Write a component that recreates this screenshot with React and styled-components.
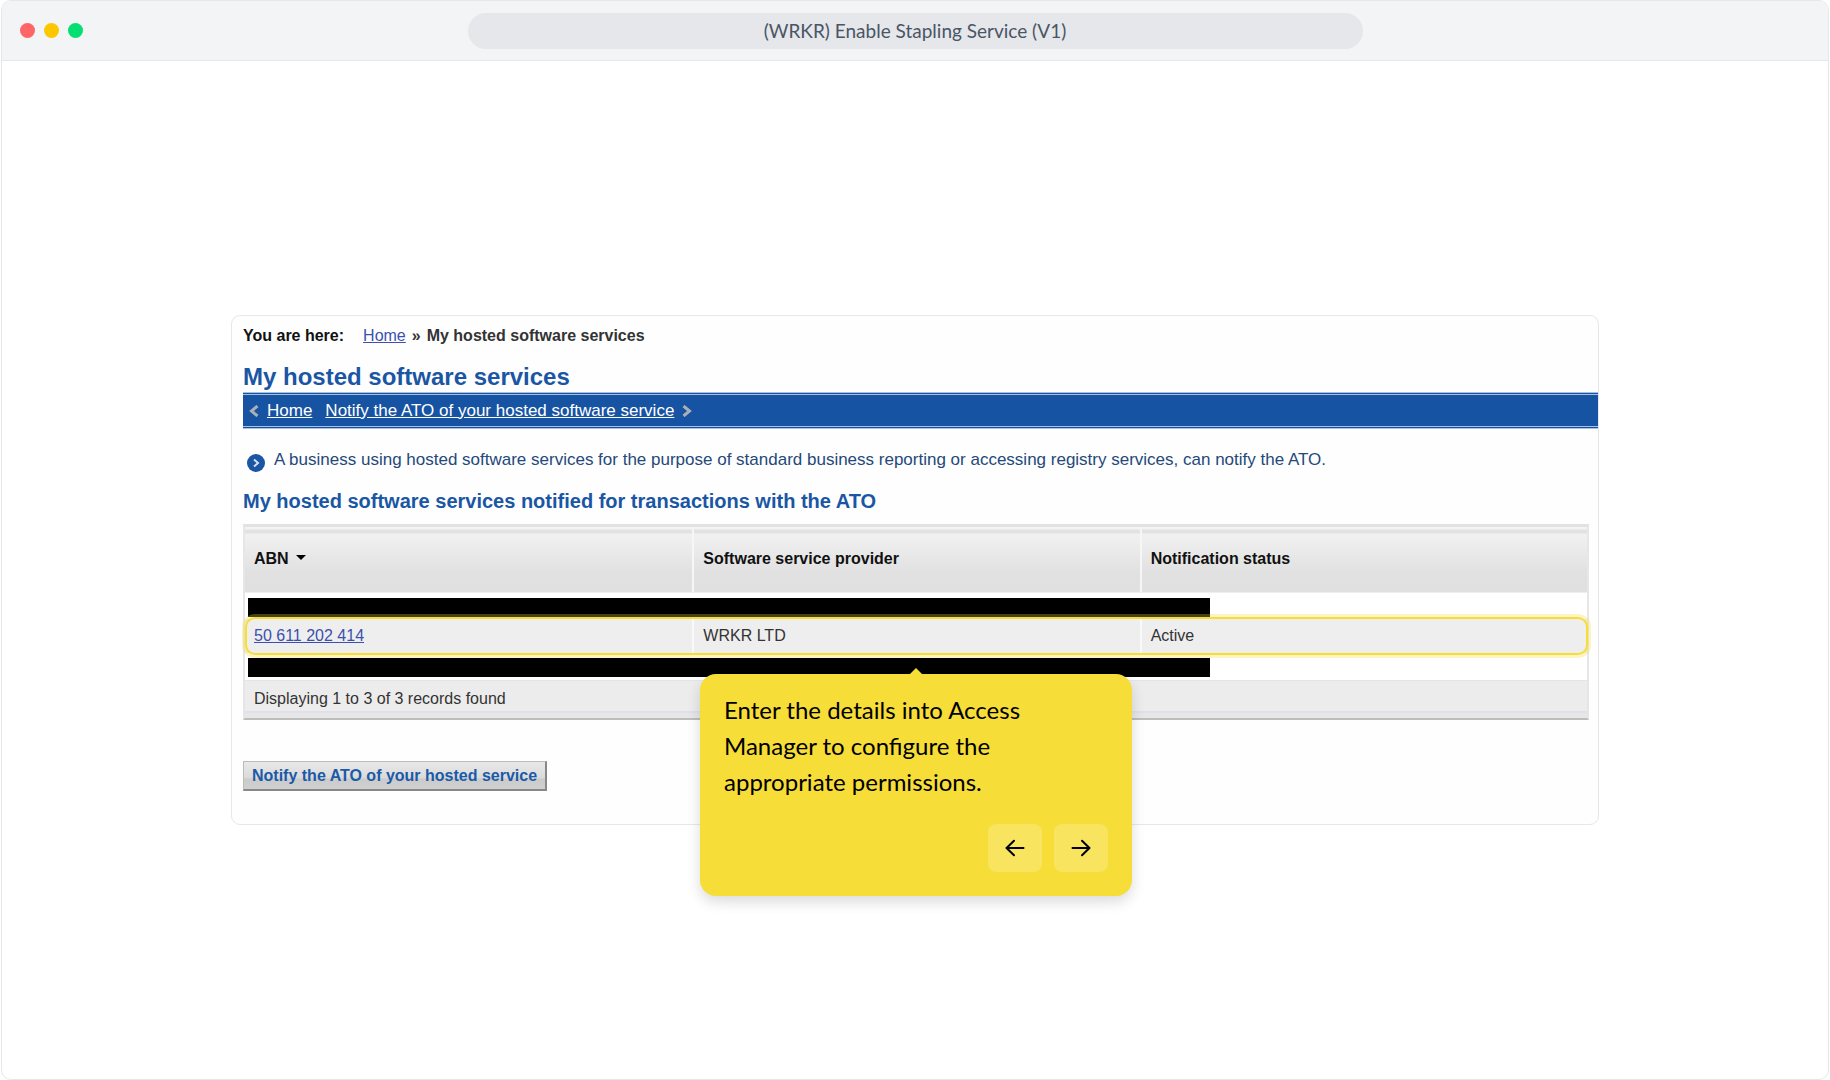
import React from "react";
import styled, { createGlobalStyle } from "styled-components";

const GlobalStyle = createGlobalStyle`
  * {
    box-sizing: border-box;
  }

  body {
    margin: 0;
    background: #fff;
    font-family: "Liberation Sans", Arial, sans-serif;
  }

  h1, h2, p {
    margin: 0;
  }
`;

const Window = styled.div`
  display: flex;
  flex-direction: column;
  min-height: 100vh;
  margin: 0 1px;
  border: 1px solid #e5e7eb;
  border-radius: 10px;
  background: #fff;
  overflow: hidden;
`;

const TitleBar = styled.header`
  display: grid;
  grid-template-columns: 1fr 50% 1fr;
  align-items: center;
  height: 60px;
  padding: 0 18px;
  border-bottom: 1px solid #e5e7eb;
  background: #f3f4f6;
`;

const Dots = styled.div`
  display: flex;
  gap: 9px;
`;

const Dot = styled.span`
  width: 15px;
  height: 15px;
  border-radius: 50%;
  background: ${(props) => props.$color};
`;

const Title = styled.div`
  grid-column: 2;
  border-radius: 18px;
  background: #e5e7eb;
  color: #4a5565;
  font-family: Lato, sans-serif;
  font-size: 19px;
  line-height: 36px;
  text-align: center;
`;

const Stage = styled.main`
  flex: 1;
  display: flex;
  flex-direction: column;
  justify-content: center;
  padding: 24px 229px;
`;

const Card = styled.section`
  padding: 9px 0 33px 11px;
  border: 1px solid #e5e7eb;
  border-radius: 9px;
  background: #fefefe;
`;

const Breadcrumb = styled.nav`
  display: flex;
  gap: 6px;
  color: #333;
  font-size: 16px;
  font-weight: bold;
  line-height: 22px;
`;

const Lead = styled.span`
  margin-right: 13px;
  color: #111;
`;

const TextLink = styled.a`
  color: #3c50b0;
  font-weight: normal;
  text-decoration: underline;
`;

const PageTitle = styled.h1`
  margin-top: 16px;
  color: #1a56a4;
  font-size: 24px;
  line-height: 28px;
`;

const LinkBar = styled.nav`
  display: flex;
  align-items: center;
  height: 37px;
  margin-top: 1px;
  padding: 0 6px;
  border-top: 3px double #a9c1e0;
  border-bottom: 3px double #a9c1e0;
  background: #1653a2;
  font-size: 17px;
`;

const BarLink = styled.a`
  margin-left: ${(props) => props.$gap}px;
  color: #fff;
  text-decoration: underline;
`;

const Chevron = styled.svg`
  width: 10px;
  height: 12px;
  margin-left: ${(props) => props.$gap || 0}px;
  fill: none;
  stroke: #a9b0b8;
  stroke-width: 3;
`;

const Note = styled.p`
  display: flex;
  gap: 9px;
  margin-top: 19px;
  padding-left: 4px;
  color: #24497a;
  font-size: 17px;
  line-height: 24px;

  svg {
    flex: none;
    margin-top: 6px;
  }
`;

const SectionTitle = styled.h2`
  margin-top: 17px;
  color: #1a56a4;
  font-size: 20px;
  line-height: 24px;
`;

const TableFrame = styled.div`
  margin: 11px 9px 0 0;
  border: 2px solid #e6e6e6;
  border-top: 3px solid #e2e2e2;
  border-bottom-color: #bdbdbd;
`;

const Table = styled.table`
  width: 100%;
  table-layout: fixed;
  border-spacing: 0;
  color: #333;
  font-size: 16px;
  text-align: left;
`;

const HeadCell = styled.th`
  height: 66px;
  padding: 0 9px 2px;
  border-bottom: 1px solid #efefef;
  background: linear-gradient(
    #f3f3f3 2px,
    #e2e2e2 3px,
    #e2e2e2 6px,
    #f1f1f1 7px,
    #e1e1e1 45px,
    #e0e0e0
  );
  color: #111;

  & + & {
    border-left: 2px solid #f6f6f6;
  }

  svg {
    margin-left: 7px;
    vertical-align: 4px;
  }
`;

const HiddenCell = styled.td`
  padding: 5px 3px ${(props) => props.$below}px;
  background: #fff;
`;

const Redaction = styled.div`
  width: 72%;
  height: 19px;
  background: #000;
`;

const ActiveRow = styled.tr`
  position: relative;
`;

const Highlight = styled.div`
  position: absolute;
  inset: -2px -1px -2px 0;
  border: 2px solid #f6dd38;
  border-radius: 10px;
  box-shadow: 0 0 0 3px rgba(246, 221, 56, 0.3);
  pointer-events: none;
`;

const Cell = styled.td`
  height: 34px;
  padding: 0 9px;
  background: #eee;

  & + & {
    border-left: 2px solid #f9f9f9;
  }
`;

const FootCell = styled.td`
  height: 38px;
  padding: 0 9px 2px;
  border-top: 1px solid #e4e4e4;
  background: linear-gradient(
    #ececec 30px,
    #e0e0ec 30px,
    #e0e0ec 32px,
    #e7e7e7 32px
  );
`;

const NotifyButton = styled.button`
  display: block;
  height: 30px;
  margin-top: 41px;
  padding: 0 8px;
  border: 1px solid #bbb;
  border-right: 2px solid #888;
  border-bottom: 2px solid #888;
  background: linear-gradient(#e8e8e8, #dadada 60%, #cbcbcb 62%, #d0d0d0);
  color: #1a5aa8;
  font-family: inherit;
  font-size: 16px;
  font-weight: bold;
`;

const Popover = styled.div`
  position: absolute;
  top: calc(100% + 21px);
  left: 50%;
  z-index: 1;
  width: 432px;
  padding: 18px 24px 24px;
  border-radius: 16px;
  background: #f6dd38;
  box-shadow: 0 6px 14px rgba(0, 0, 0, 0.14);
  color: #000;
  font-family: Lato, sans-serif;
  font-size: 24px;
  line-height: 36px;
  transform: translateX(-50%);

  &::before {
    content: "";
    position: absolute;
    top: -6px;
    left: 50%;
    margin-left: -6px;
    border: 6px solid transparent;
    border-top: 0;
    border-bottom-color: #f6dd38;
  }
`;

const PopoverText = styled.p`
  padding-right: 60px;
`;

const PopoverActions = styled.div`
  display: flex;
  justify-content: flex-end;
  gap: 12px;
  margin-top: 24px;
`;

const ArrowButton = styled.button`
  display: grid;
  place-items: center;
  width: 54px;
  height: 48px;
  padding: 0;
  border: 0;
  border-radius: 8px;
  background: #f8e45f;
  cursor: pointer;

  svg {
    fill: none;
    stroke: #000;
    stroke-width: 2;
    stroke-linecap: round;
    stroke-linejoin: round;
  }
`;

const StepPopover = () => {
  return (
    <Popover role="dialog" aria-label="Step">
      <PopoverText>
        Enter the details into Access Manager to configure the appropriate
        permissions.
      </PopoverText>
      <PopoverActions>
        <ArrowButton aria-label="Previous step">
          <svg width="20" height="18" viewBox="0 0 20 18">
            <path d="M18.5 9H1.5M9 1.8L1.5 9L9 16.2" />
          </svg>
        </ArrowButton>
        <ArrowButton aria-label="Next step">
          <svg width="20" height="18" viewBox="0 0 20 18">
            <path d="M1.5 9H18.5M11 1.8L18.5 9L11 16.2" />
          </svg>
        </ArrowButton>
      </PopoverActions>
    </Popover>
  );
};

const ServicesTable = () => {
  return (
    <TableFrame>
      <Table>
        <thead>
          <tr>
            <HeadCell>
              ABN
              <svg width="10" height="5" viewBox="0 0 10 5">
                <path d="M0 0H10L5 5Z" />
              </svg>
            </HeadCell>
            <HeadCell>Software service provider</HeadCell>
            <HeadCell>Notification status</HeadCell>
          </tr>
        </thead>
        <tbody>
          <tr>
            <HiddenCell colSpan={3} $below={2}>
              <Redaction />
            </HiddenCell>
          </tr>
          <ActiveRow>
            <Cell>
              <TextLink href="#abn">50 611 202 414</TextLink>
              <Highlight />
              <StepPopover />
            </Cell>
            <Cell>WRKR LTD</Cell>
            <Cell>Active</Cell>
          </ActiveRow>
          <tr>
            <HiddenCell colSpan={3} $below={3}>
              <Redaction />
            </HiddenCell>
          </tr>
        </tbody>
        <tfoot>
          <tr>
            <FootCell colSpan={3}>Displaying 1 to 3 of 3 records found</FootCell>
          </tr>
        </tfoot>
      </Table>
    </TableFrame>
  );
};

const App = () => {
  return (
    <>
      <GlobalStyle />
      <Window>
        <TitleBar>
          <Dots>
            <Dot $color="#ff6467" />
            <Dot $color="#fdc700" />
            <Dot $color="#05df72" />
          </Dots>
          <Title>(WRKR) Enable Stapling Service (V1)</Title>
        </TitleBar>
        <Stage>
          <Card>
            <Breadcrumb>
              <Lead>You are here:</Lead>
              <TextLink href="#home">Home</TextLink>
              <span>»</span>
              <span>My hosted software services</span>
            </Breadcrumb>
            <PageTitle>My hosted software services</PageTitle>
            <LinkBar>
              <Chevron viewBox="0 0 10 12">
                <path d="M8.5 1L2.5 6L8.5 11" />
              </Chevron>
              <BarLink href="#home" $gap={8}>
                Home
              </BarLink>
              <BarLink href="#notify" $gap={13}>
                Notify the ATO of your hosted software service
              </BarLink>
              <Chevron viewBox="0 0 10 12" $gap={8}>
                <path d="M1.5 1L7.5 6L1.5 11" />
              </Chevron>
            </LinkBar>
            <Note>
              <svg width="18" height="18" viewBox="0 0 18 18">
                <circle cx="9" cy="9" r="9" fill="#1a56a4" />
                <path
                  d="M7 5.5L11 9L7 12.5"
                  fill="none"
                  stroke="#d5e1f0"
                  strokeWidth="2"
                />
              </svg>
              A business using hosted software services for the purpose of
              standard business reporting or accessing registry services, can
              notify the ATO.
            </Note>
            <SectionTitle>
              My hosted software services notified for transactions with the ATO
            </SectionTitle>
            <ServicesTable />
            <NotifyButton>Notify the ATO of your hosted service</NotifyButton>
          </Card>
        </Stage>
      </Window>
    </>
  );
};

export default App;
